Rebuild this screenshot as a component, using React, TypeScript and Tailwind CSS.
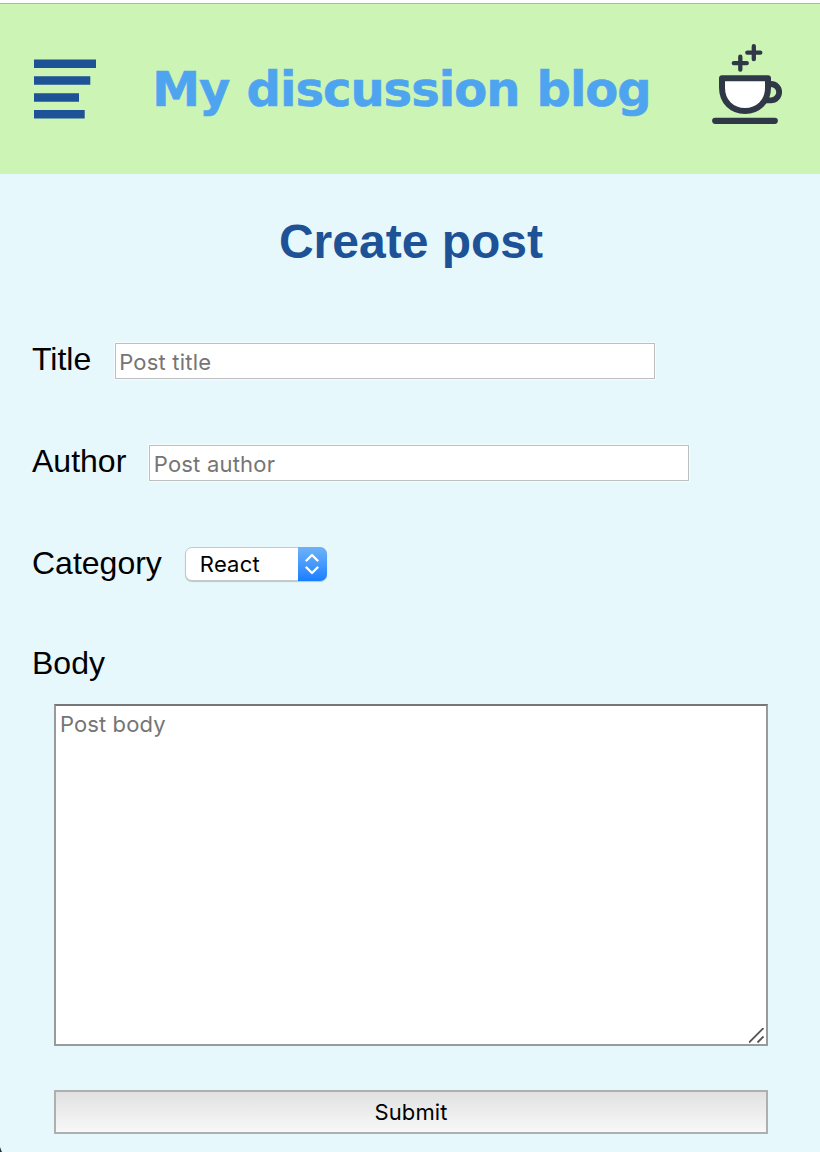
import React from 'react';

function MenuIcon() {
  return (
    <svg width="62" height="60" viewBox="0 0 62 60" fill="#1e5296" aria-hidden="true">
      <path d="M0 .4h62V9H0zM0 17.3h56.3v8.5H0zM0 34.3h45v8.5H0zM0 51h50.7v8.6H0z" />
    </svg>
  );
}

function CupIcon() {
  return (
    <svg className="-mt-2.5" width="72" height="82" viewBox="711 43 72 82" fill="none" stroke="#2f3847" strokeLinecap="round" strokeLinejoin="round" aria-hidden="true">
      <path d="M753.8 46.2v13M747.3 52.7h13M740.3 56.7v13M733.8 63.2h13" strokeWidth="4.3" />
      <path d="M768 84h3a7.8 7.8 0 0 1 0 16.3h-6" strokeWidth="5.8" />
      <path d="M722 78.2h46v9.6c0 14-10 23.2-23 23.2s-23-9.2-23-23.2z" fill="#fff" strokeWidth="6" />
      <path d="M715.2 120.8h59.6" strokeWidth="6.2" />
    </svg>
  );
}

function TextField({ id, label, placeholder }: { id: string; label: string; placeholder: string }) {
  return (
    <div className="flex h-[38px] items-center gap-[23px]">
      <label htmlFor={id} className="-mt-1 min-w-[59.7px] text-[32px] leading-8">{label}</label>
      <input
        id={id}
        placeholder={placeholder}
        className="h-9 w-[540px] border border-[#bebebe] bg-white px-[3.5px] pt-0.5 font-[Inter,sans-serif] text-[22px] tracking-[0.2px] outline-1 outline-white/60 placeholder:text-[#757575]"
      />
    </div>
  );
}

export default function App() {
  return (
    <div className="h-[1152px] overflow-hidden bg-[#e6f8fc] font-['Liberation_Sans',Arial,sans-serif] text-black">
      <div className="h-1 border-b border-[#b2b2b2] bg-white" />
      <header className="flex h-[170px] items-center justify-between bg-[#ccf4b5] pr-[37px] pl-[34px]">
        <button aria-label="Menu" className="-mt-px"><MenuIcon /></button>
        <div className="-mt-px mr-[4px] font-['DejaVu_Sans',sans-serif] text-[48px] leading-none font-bold tracking-[-1px] [word-spacing:1.5px] whitespace-nowrap text-[#4fa4f0] [-webkit-text-stroke:0.6px_#4fa4f0]">
          My discussion blog
        </div>
        <CupIcon />
      </header>
      <main>
        <h1 className="pt-[41px] pl-0.5 text-center text-[48px] leading-[54px] font-bold text-[#1e5296]">Create post</h1>
        <form className="pt-[73px]" onSubmit={(e) => e.preventDefault()}>
          <div className="flex flex-col gap-16 pl-8">
            <TextField id="title" label="Title" placeholder="Post title" />
            <TextField id="author" label="Author" placeholder="Post author" />
            <div className="flex h-[38px] items-center gap-[23px]">
              <label htmlFor="category" className="-mt-1 text-[32px] leading-8">Category</label>
              <div className="relative -mt-0.5 h-[34px] w-[142px]">
                <select id="category" className="h-[34px] w-[142px] appearance-none rounded-[7px] border border-[#c3cacc] bg-white pl-3.5 font-[Inter,sans-serif] text-[22px] leading-none tracking-[0.2px] shadow-[0_1px_1px_rgba(0,0,0,0.2)]">
                  <option>React</option>
                </select>
                <span className="pointer-events-none absolute top-0 right-0 flex h-[34px] w-[29px] items-center justify-center rounded-r-[7px] bg-linear-to-b from-[#6db3f8] to-[#167dff]">
                  <svg width="14" height="22" viewBox="0 0 14 22" fill="none" stroke="#fff" strokeWidth="2.4" strokeLinecap="round" strokeLinejoin="round">
                    <path d="m1.5 7.5 5.5-5.5 5.5 5.5M1.5 14.5l5.5 5.5 5.5-5.5" />
                  </svg>
                </span>
              </div>
            </div>
            <label htmlFor="body" className="-mt-[1px] text-[32px] leading-8">Body</label>
          </div>
          <div className="relative mt-[25px] ml-[54px] h-[342px] w-[714px]">
            <textarea
              id="body"
              placeholder="Post body"
              className="block h-full w-full resize-none border-2 border-[#979b99] border-t-[#777] bg-white px-1 py-1 font-[Inter,sans-serif] text-[22px] leading-7 tracking-[0.1px] placeholder:text-[#757575]"
            />
            <svg className="pointer-events-none absolute right-[3px] bottom-[2px]" width="16" height="16" viewBox="0 0 16 16" stroke="#555" strokeWidth="1.8">
              <path d="M0 14.5 14.5 0M8.5 14.5l6-6" />
            </svg>
          </div>
          <button className="mt-11 ml-[54px] block h-11 w-[714px] border-2 border-[#aeb0af] bg-linear-to-b from-[#e1e1e1] to-[#f8f8f8] font-[Inter,sans-serif] text-[22px] leading-none tracking-[0.1px]">
            Submit
          </button>
        </form>
        <svg className="mt-[13px]" width="3" height="5" viewBox="0 0 3 5" fill="#26333b" aria-hidden="true">
          <path d="M0 0q1 3 2 5H0z" />
        </svg>
      </main>
    </div>
  );
}
